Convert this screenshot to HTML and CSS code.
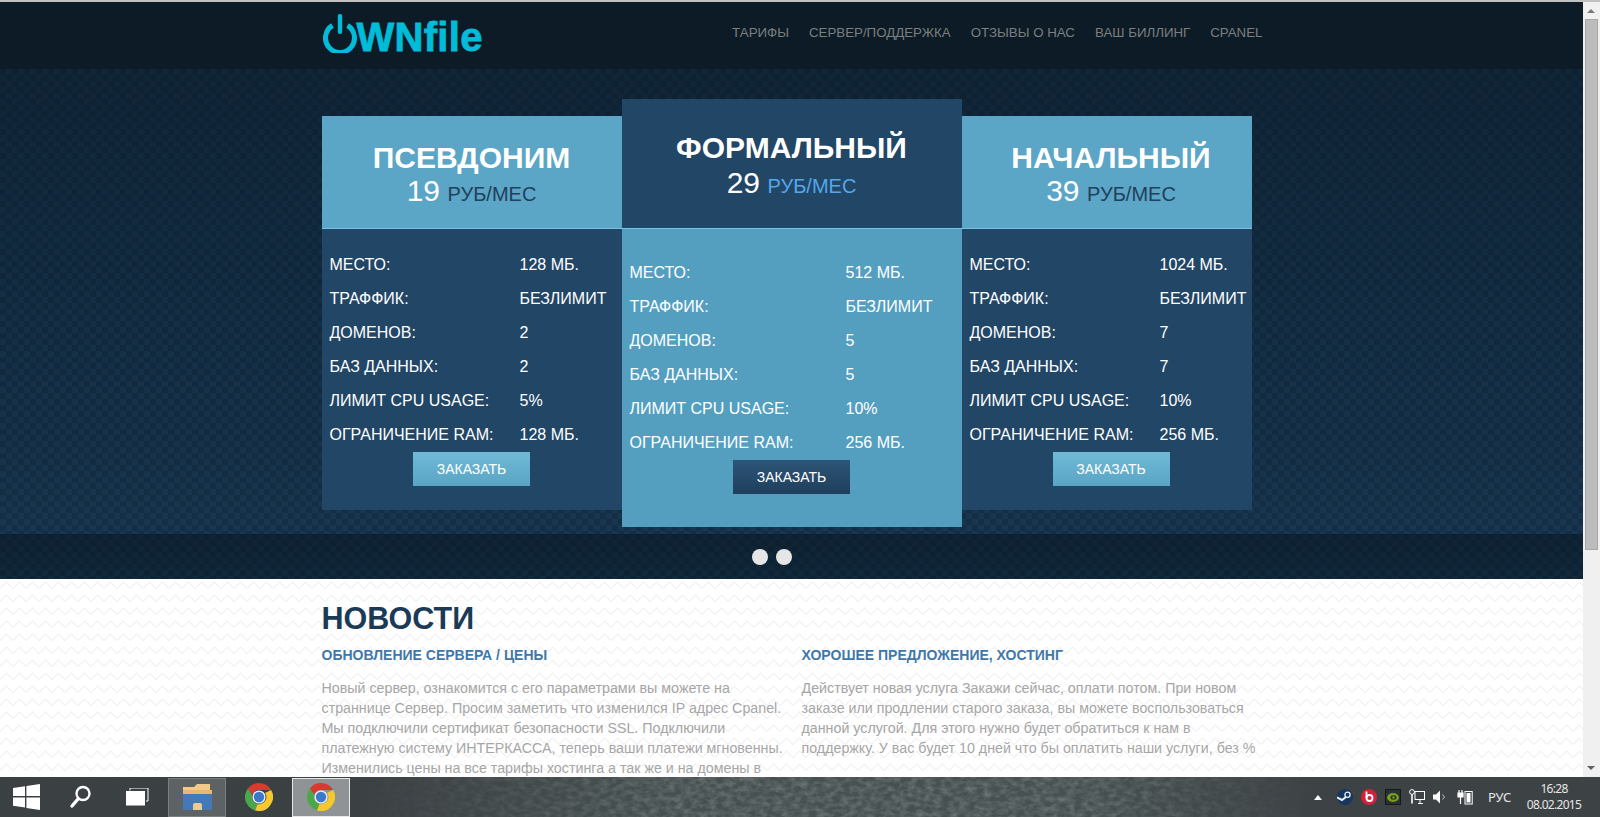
FILE: index.html
```html
<!DOCTYPE html>
<html lang="ru">
<head>
    <meta charset="UTF-8">
    <meta name="viewport" content="width=device-width, initial-scale=1.0">
    <title>OWNfile</title>
    <link rel="stylesheet" href="styles.css">
</head>
<body>
    <svg class="defs" width="0" height="0">
        <symbol id="chrome" viewBox="0 0 28 28">
            <path d="M14 0a14 14 0 0 1 12.1 7H14a7 7 0 0 0-6.7 5L2.9 5.4A14 14 0 0 1 14 0z" fill="#d9392f"/>
            <path d="M2.9 5.4 7.3 12a7 7 0 0 0 5.3 8.9L10 27.4A14 14 0 0 1 2.9 5.4z" fill="#4ba84a"/>
            <path d="M26.1 7A14 14 0 0 1 10 27.4l2.6-6.5A7 7 0 0 0 20 10z" fill="#f5c92e"/>
            <circle cx="14" cy="14" r="6.6" fill="#e8eef5"/>
            <circle cx="14" cy="14" r="5.2" fill="#3b78c8"/>
        </symbol>
    </svg>

    <div class="topline"></div>

    <div class="browser">
        <div class="page">
            <header class="header">
                <div class="container header-inner">
                    <a class="logo">
                        <svg class="logo-icon" width="36" height="39" viewBox="0 0 36 39">
                            <path d="M10.5 11.5a14.5 14.5 0 1 0 15 0" fill="none" stroke="#00bcd9" stroke-width="5"/>
                            <rect x="15.8" y="0" width="4.4" height="20" rx="2" fill="#00bcd9"/>
                        </svg>
                        <span class="logo-text">WNfile</span>
                    </a>
                    <nav class="nav">
                        <a>Тарифы</a>
                        <a>Сервер/Поддержка</a>
                        <a>Отзывы о нас</a>
                        <a>Ваш биллинг</a>
                        <a>cPanel</a>
                    </nav>
                </div>
            </header>

            <section class="hero">
                <div class="container plans">
                    <div class="plan">
                        <div class="plan-head">
                            <h2>Псевдоним</h2>
                            <p class="price"><span>19</span> руб/мес</p>
                        </div>
                        <div class="plan-body">
                            <div class="specs">
                                <span>Место:</span><span>128 Мб.</span>
                                <span>Траффик:</span><span>Безлимит</span>
                                <span>Доменов:</span><span>2</span>
                                <span>Баз данных:</span><span>2</span>
                                <span>Лимит CPU Usage:</span><span>5%</span>
                                <span>Ограничение RAM:</span><span>128 Мб.</span>
                            </div>
                            <a class="order">Заказать</a>
                        </div>
                    </div>

                    <div class="plan plan-featured">
                        <div class="plan-head">
                            <h2>Формальный</h2>
                            <p class="price"><span>29</span> руб/мес</p>
                        </div>
                        <div class="plan-body">
                            <div class="specs">
                                <span>Место:</span><span>512 Мб.</span>
                                <span>Траффик:</span><span>Безлимит</span>
                                <span>Доменов:</span><span>5</span>
                                <span>Баз данных:</span><span>5</span>
                                <span>Лимит CPU Usage:</span><span>10%</span>
                                <span>Ограничение RAM:</span><span>256 Мб.</span>
                            </div>
                            <a class="order">Заказать</a>
                        </div>
                    </div>

                    <div class="plan plan-last">
                        <div class="plan-head">
                            <h2>Начальный</h2>
                            <p class="price"><span>39</span> руб/мес</p>
                        </div>
                        <div class="plan-body">
                            <div class="specs">
                                <span>Место:</span><span>1024 Мб.</span>
                                <span>Траффик:</span><span>Безлимит</span>
                                <span>Доменов:</span><span>7</span>
                                <span>Баз данных:</span><span>7</span>
                                <span>Лимит CPU Usage:</span><span>10%</span>
                                <span>Ограничение RAM:</span><span>256 Мб.</span>
                            </div>
                            <a class="order">Заказать</a>
                        </div>
                    </div>
                </div>
            </section>

            <div class="pager">
                <span class="dot"></span>
                <span class="dot"></span>
            </div>

            <section class="news">
                <div class="container">
                    <h1>Новости</h1>
                    <div class="news-grid">
                        <article>
                            <h3>Обновление сервера / цены</h3>
                            <p>Новый сервер, ознакомится с его параметрами вы можете на<br>
                            страннице Сервер. Просим заметить что изменился IP адрес Cpanel.<br>
                            Мы подключили сертификат безопасности SSL. Подключили<br>
                            платежную систему ИНТЕРКАССА, теперь ваши платежи мгновенны.<br>
                            Изменились цены на все тарифы хостинга а так же и на домены в</p>
                        </article>
                        <article>
                            <h3>Хорошее предложение, хостинг</h3>
                            <p>Действует новая услуга Закажи сейчас, оплати потом. При новом<br>
                            заказе или продлении старого заказа, вы можете воспользоваться<br>
                            данной услугой. Для этого нужно будет обратиться к нам в<br>
                            поддержку. У вас будет 10 дней что бы оплатить наши услуги, без %</p>
                        </article>
                    </div>
                </div>
            </section>
        </div>

        <div class="scrollbar">
            <span class="arrow-up"></span>
            <span class="thumb"></span>
            <span class="arrow-down"></span>
        </div>
    </div>

    <footer class="taskbar">
        <div class="task task-start">
            <svg width="27" height="26" viewBox="0 0 27 26">
                <path d="M0 4 12 2.2V12H0zM13.4 2 27 0v12H13.4zM0 13.4h12v10L0 21.8zM13.4 13.4H27V26l-13.6-2z" fill="#fff"/>
            </svg>
        </div>
        <div class="task task-search">
            <svg width="24" height="26" viewBox="0 0 24 26">
                <circle cx="15" cy="9.5" r="6.5" fill="none" stroke="#fff" stroke-width="2.4"/>
                <path d="M10 15 4 22" stroke="#fff" stroke-width="3.4" stroke-linecap="round"/>
            </svg>
        </div>
        <div class="task task-view">
            <svg width="23" height="18" viewBox="0 0 23 18">
                <path d="M4 2.5V0h18v13h-2" fill="none" stroke="#fff" stroke-width="1"/>
                <rect x="0" y="3" width="19" height="14.5" fill="#fff"/>
            </svg>
        </div>
        <div class="task task-tile">
            <svg width="31" height="28" viewBox="0 0 31 28">
                <path d="M1 8V4h11l3-3h13v7z" fill="#f3c988"/>
                <rect x="1" y="7" width="29" height="4" fill="#e6b873"/>
                <path d="M1 11h29v16H1z" fill="#4479b8"/>
                <path d="M11 27v-5q0-2 2-2h5q2 0 2 2v5z" fill="#eccb92"/>
            </svg>
        </div>
        <div class="task task-chrome">
            <svg width="28" height="28"><use href="#chrome"/></svg>
        </div>
        <div class="task task-tile task-active">
            <svg width="28" height="28"><use href="#chrome"/></svg>
        </div>

        <div class="tray">
            <svg class="tray-caret" width="8" height="5" viewBox="0 0 8 5"><path d="M4 0 8 5H0z" fill="#fff"/></svg>
            <svg class="tray-icon" width="16" height="16" viewBox="0 0 16 16">
                <circle cx="8" cy="8" r="8" fill="#17375f"/>
                <circle cx="10.5" cy="5.8" r="2.6" fill="none" stroke="#e8eef5" stroke-width="1.3"/>
                <path d="M0 8.5 5 11l4-3" fill="none" stroke="#e8eef5" stroke-width="2"/>
            </svg>
            <svg class="tray-icon" width="16" height="16" viewBox="0 0 16 16">
                <circle cx="8" cy="8" r="8" fill="#d3213a"/>
                <circle cx="8.5" cy="9" r="3" fill="none" stroke="#fff" stroke-width="1.8"/>
                <path d="M5.5 2.5V9" stroke="#fff" stroke-width="1.8"/>
            </svg>
            <svg class="tray-icon" width="16" height="16" viewBox="0 0 16 16">
                <rect x="0.5" y="0.5" width="15" height="15" fill="#2a2f2f" stroke="#16191a"/>
                <ellipse cx="8" cy="8.5" rx="6" ry="4.4" fill="#76a01e"/>
                <ellipse cx="8.5" cy="8.5" rx="3" ry="2.2" fill="#2a2f2f"/>
                <circle cx="8.5" cy="8.5" r="1.2" fill="#76a01e"/>
            </svg>
            <svg class="tray-icon" width="16" height="16" viewBox="0 0 16 16">
                <rect x="6" y="2.5" width="9.5" height="8" fill="none" stroke="#fff"/>
                <path d="M9 14.5h5M11 10.5v4" stroke="#fff"/>
                <circle cx="3" cy="3" r="2.4" fill="none" stroke="#fff"/>
                <path d="M3 5.5v9" stroke="#fff" stroke-width="1.6"/>
            </svg>
            <svg class="tray-icon" width="16" height="16" viewBox="0 0 16 16">
                <path d="M0 5.5h3L7 1.5v13l-4-4H0z" fill="#fff"/>
                <path d="M9.5 5.5 11.5 8l-2 2.5" fill="none" stroke="#c5c8ca"/>
            </svg>
            <svg class="tray-icon" width="16" height="16" viewBox="0 0 16 16">
                <path d="M1 4h5v4H1zM2 1v3M5 1v3M3.5 8v7" fill="#fff" stroke="#fff" stroke-width="1.2"/>
                <rect x="8" y="2.5" width="7.2" height="12.5" fill="none" stroke="#fff"/>
                <rect x="9.5" y="4" width="4" height="9.5" fill="#fff"/>
            </svg>
            <span class="tray-lang">РУС</span>
            <div class="clock">
                <span>16:28</span>
                <span>08.02.2015</span>
            </div>
        </div>
    </footer>
</body>
</html>
```

FILE: styles.css
```css
* {
    box-sizing: border-box;
}
html, body {
    height: 100%;
    margin: 0;
    overflow: hidden;
}
body {
    display: flex;
    flex-direction: column;
    font-family: "Liberation Sans", Arial, sans-serif;
    background-color: #fff;
}
h1, h2, h3, p {
    margin: 0;
}
.defs {
    display: block;
    height: 0;
}
.topline {
    height: 2px;
    background-color: #c2c2c2;
    flex: none;
}
.browser {
    flex: 1;
    display: flex;
    min-height: 0;
}
.page {
    flex: 1;
    min-width: 0;
    overflow: hidden;
}
.container {
    width: 940px;
    margin: 0 auto;
}

/* header */
.header {
    height: 67px;
    background-color: #0d1b26;
}
.header-inner {
    display: flex;
    justify-content: space-between;
    align-items: flex-start;
}
.logo {
    display: flex;
    align-items: flex-start;
    margin-top: 12px;
}
.logo-icon {
    flex: none;
}
.logo-text {
    font-size: 40px;
    line-height: 38px;
    margin: 4px 0 0 -1px;
    font-weight: bold;
    letter-spacing: 0.3px;
    color: #00bcd9;
    -webkit-text-stroke: 0.8px #00bcd9;
}
.nav {
    display: flex;
    gap: 20px;
    margin: 23px -1px 0 0;
}
.nav a {
    font-size: 13.3px;
    line-height: 16px;
    color: #7b7f80;
    text-transform: uppercase;
}

/* plans */
.hero {
    height: 465px;
    padding-top: 30px;
    background-image: linear-gradient(rgba(8, 20, 30, 0.5), rgba(8, 20, 30, 0)), repeating-conic-gradient(#18364f 0 25%, #132e46 0 50%);
    background-size: 100% 100%, 12px 12px;
}
.plans {
    display: flex;
    align-items: flex-start;
}
.plan {
    width: 300px;
    margin-top: 17px;
    color: #fff;
}
.plan-head {
    height: 113px;
    padding-top: 26px;
    text-align: center;
    background-color: #5ba5c6;
    border-bottom: 1px solid #73c3e4;
}
.plan-head h2 {
    font-size: 30px;
    line-height: 32px;
    text-transform: uppercase;
}
.price {
    font-size: 20px;
    line-height: 34px;
    text-transform: uppercase;
    color: #21405c;
}
.price span {
    font-size: 30px;
    margin-right: 2px;
    color: #fff;
}
.plan-body {
    height: 281px;
    padding-top: 19px;
    background-color: #224666;
}
.specs {
    display: grid;
    grid-template-columns: 190px 1fr;
    grid-auto-rows: 34px;
    align-items: center;
    padding-left: 8px;
    font-size: 16px;
    text-transform: uppercase;
    white-space: nowrap;
}
.order {
    display: block;
    width: 117px;
    height: 34px;
    margin: 0 auto;
    font-size: 14px;
    line-height: 34px;
    text-align: center;
    text-transform: uppercase;
    color: #fff;
    background: linear-gradient(#70bad8, #5aa4c4);
}

.plan-featured {
    width: 340px;
    margin-top: 0;
}
.plan-featured .plan-head {
    height: 130px;
    padding-top: 33px;
    background-color: #224666;
}
.plan-featured .price {
    margin-top: 2px;
    color: #52a8ea;
}
.plan-featured .plan-body {
    height: 298px;
    padding-top: 27px;
    background-color: #549fc0;
}
.plan-featured .specs {
    grid-template-columns: 216px 1fr;
}
.plan-featured .order {
    background: linear-gradient(#2c5578, #1f3f5c);
}

.plan-last {
    width: 290px;
}
.plan-last .plan-head {
    padding-left: 9px;
}
.plan-last .order {
    margin-left: 91px;
}

/* slider dots */
.pager {
    height: 45px;
    display: flex;
    justify-content: center;
    align-items: center;
    gap: 8px;
    padding-right: 39px;
    background-image: linear-gradient(rgba(8, 20, 30, 0.3), rgba(8, 20, 30, 0)), repeating-conic-gradient(#11293c 0 25%, #0e2435 0 50%);
    background-size: 100% 100%, 12px 12px;
}
.dot {
    width: 16px;
    height: 16px;
    border-radius: 50%;
    background-color: #e6e6e6;
}

/* news */
.news {
    height: 198px;
    overflow: hidden;
    padding-top: 20px;
    background-color: #fff;
    background-image: url("data:image/svg+xml,%3Csvg xmlns='http://www.w3.org/2000/svg' width='13' height='13'%3E%3Cpath d='M0 9.5 6.5 3l6.5 6.5' fill='none' stroke='%23f1f1f1' stroke-width='1.2'/%3E%3C/svg%3E");
}
.news h1 {
    font-size: 30.5px;
    line-height: 38px;
    text-transform: uppercase;
    color: #1a3a56;
}
.news-grid {
    display: grid;
    grid-template-columns: 460px 460px;
    gap: 20px;
    margin-top: 8px;
}
.news h3 {
    font-size: 14px;
    line-height: 20px;
    text-transform: uppercase;
    color: #3f78a8;
}
.news p {
    margin-top: 13px;
    font-size: 14.25px;
    line-height: 20px;
    white-space: nowrap;
    color: #a6a6a6;
}

/* scrollbar */
.scrollbar {
    width: 17px;
    flex: none;
    position: relative;
    background-color: #f0f0f0;
}
.thumb {
    position: absolute;
    left: 2px;
    top: 17px;
    width: 13px;
    height: 531px;
    background-color: #bcbcbc;
    border: 1px solid #a8a8a8;
}
.arrow-up, .arrow-down {
    position: absolute;
    left: 4px;
    width: 0;
    height: 0;
    border-left: 4px solid transparent;
    border-right: 4px solid transparent;
}
.arrow-up {
    top: 7px;
    border-bottom: 4px solid #7a7a7a;
}
.arrow-down {
    bottom: 7px;
    border-top: 4px solid #606060;
}

/* windows taskbar */
.taskbar {
    height: 40px;
    flex: none;
    display: flex;
    align-items: center;
    background-image: linear-gradient(90deg, #3b4043 0, #3b4043 22%, rgba(59, 64, 67, 0.5) 32%, rgba(59, 64, 67, 0) 42%, rgba(59, 64, 67, 0) 68%, #3d4245 82%), url("data:image/svg+xml,%3Csvg xmlns='http://www.w3.org/2000/svg' width='900' height='40'%3E%3Cfilter id='n'%3E%3CfeTurbulence type='fractalNoise' baseFrequency='0.12 0.2' numOctaves='4'/%3E%3CfeColorMatrix values='0 0 0 0 0.7 0 0 0 0 0.76 0 0 0 0 0.76 0 0 0 0.45 -0.15'/%3E%3C/filter%3E%3Crect width='900' height='40' filter='url(%23n)'/%3E%3C/svg%3E"), linear-gradient(#465051, #465051);
    color: #e6e6e6;
    font-family: "Noto Sans", sans-serif;
    font-size: 12px;
}
.task {
    height: 39px;
    display: flex;
    align-items: center;
    justify-content: center;
}
.task-start {
    width: 52px;
}
.task-search {
    width: 56px;
}
.task-view {
    width: 58px;
}
.task-chrome {
    width: 66px;
}
.task-tile {
    width: 58px;
    margin-left: 2px;
    background-color: #5d6265;
    border: 1px solid #7a7f81;
}
.task-active {
    margin-left: 0;
    background-color: #8f9395;
    border-color: #e8e8e8;
}
.tray {
    margin-left: auto;
    display: flex;
    align-items: center;
    height: 100%;
}
.tray-caret {
    margin-right: 15px;
}
.tray-icon {
    margin-right: 8px;
}
.tray-lang {
    margin-left: 7px;
    width: 34px;
    font-size: 13px;
}
.clock {
    width: 78px;
    padding-right: 14px;
    display: flex;
    flex-direction: column;
    align-items: center;
    font-size: 12px;
    letter-spacing: -0.7px;
    line-height: 16px;
}
```
